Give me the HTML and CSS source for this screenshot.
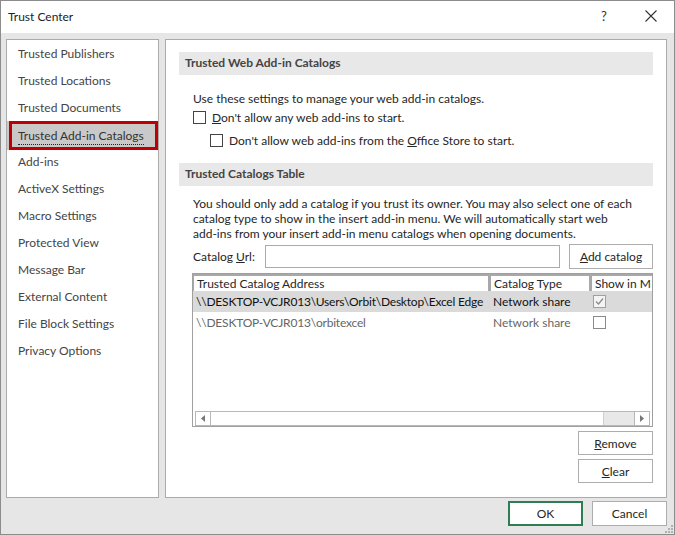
FILE: index.html
```html
<!DOCTYPE html>
<html>
<head>
<meta charset="utf-8">
<title>Trust Center</title>
<link rel="stylesheet" href="styles.css">
</head>
<body>
<div class="window">
  <div class="titlebar">
    <span class="title">Trust Center</span>
    <span class="help">?</span>
    <span class="close"><svg width="12" height="12" viewBox="0 0 12 12"><path d="M0.5 0.5 L11.5 11.5 M11.5 0.5 L0.5 11.5" stroke="#333" stroke-width="1.1" fill="none"/></svg></span>
  </div>
  <div class="main">
    <nav class="sidebar">
      <div class="nav-item">Trusted Publishers</div>
      <div class="nav-item">Trusted Locations</div>
      <div class="nav-item">Trusted Documents</div>
      <div class="nav-item selected"><span class="focus">Trusted Add-in Catalogs</span></div>
      <div class="nav-item">Add-ins</div>
      <div class="nav-item">ActiveX Settings</div>
      <div class="nav-item">Macro Settings</div>
      <div class="nav-item">Protected View</div>
      <div class="nav-item">Message Bar</div>
      <div class="nav-item">External Content</div>
      <div class="nav-item">File Block Settings</div>
      <div class="nav-item">Privacy Options</div>
    </nav>
    <section class="panel">
      <div class="section-head">Trusted Web Add-in Catalogs</div>
      <div class="section-body">
        <p class="intro">Use these settings to manage your web add-in catalogs.</p>
        <label class="check first"><span class="box"></span><span><u>D</u>on't allow any web add-ins to start.</span></label>
        <label class="check sub"><span class="box"></span><span>Don't allow web add-ins from the <u>O</u>ffice Store to start.</span></label>
      </div>
      <div class="section-head second">Trusted Catalogs Table</div>
      <div class="section-body">
        <p class="desc">You should only add a catalog if you trust its owner. You may also select one of each<br>catalog type to show in the insert add-in menu. We will automatically start web<br>add-ins from your insert add-in menu catalogs when opening documents.</p>
        <div class="url-row">
          <span class="url-label">Catalog <u>U</u>rl:</span>
          <span class="url-input"></span>
          <button class="btn add-btn"><u>A</u>dd catalog</button>
        </div>
        <div class="table">
          <div class="thead">
            <div class="th">Trusted Catalog Address</div>
            <div class="th">Catalog Type</div>
            <div class="th">Show in M</div>
          </div>
          <div class="tbody">
            <div class="tr selected-row">
              <div class="td">\\DESKTOP-VCJR013\Users\Orbit\Desktop\Excel Edge</div>
              <div class="td">Network share</div>
              <div class="td"><span class="cb checked"><svg width="11" height="11" viewBox="0 0 11 11"><path d="M2 5.5 L4.5 8 L9 2.5" stroke="#8a8a8a" stroke-width="1.2" fill="none"/></svg></span></div>
            </div>
            <div class="tr dim-row">
              <div class="td">\\DESKTOP-VCJR013\orbitexcel</div>
              <div class="td">Network share</div>
              <div class="td"><span class="cb"></span></div>
            </div>
          </div>
          <div class="hscroll">
            <span class="arrow"><svg width="4" height="7" viewBox="0 0 4 7"><path d="M4 0 L0 3.5 L4 7 Z" fill="#777"/></svg></span>
            <span class="thumb"></span>
            <span class="track"></span>
            <span class="arrow right"><svg width="4" height="7" viewBox="0 0 4 7"><path d="M0 0 L4 3.5 L0 7 Z" fill="#777"/></svg></span>
          </div>
        </div>
        <div class="side-buttons">
          <button class="btn side-btn"><u>R</u>emove</button>
          <button class="btn side-btn"><u>C</u>lear</button>
        </div>
      </div>
    </section>
  </div>
  <div class="footer">
    <button class="btn foot-btn ok">OK</button>
    <button class="btn foot-btn">Cancel</button>
  </div>
  <span class="grip"><svg width="8" height="8" viewBox="0 0 8 8"><g fill="#b0b0b0"><rect x="6" y="0" width="2" height="2"/><rect x="3" y="3" width="2" height="2"/><rect x="6" y="3" width="2" height="2"/><rect x="0" y="6" width="2" height="2"/><rect x="3" y="6" width="2" height="2"/><rect x="6" y="6" width="2" height="2"/></g></svg></span>
</div>
</body>
</html>
```
FILE: styles.css
```css
* { box-sizing: border-box; }
html, body { margin: 0; padding: 0; background: #fff; }
body {
  font-family: "Lato", "Liberation Sans", sans-serif;
  font-size: 12px;
  color: #262626;
}
u { text-decoration: underline; text-underline-offset: 1px; }

.window {
  position: relative;
  width: 675px;
  height: 535px;
  border: 1px solid #8c8c8c;
  display: flex;
  flex-direction: column;
  background: #e6e6e6;
}

.titlebar {
  height: 32px;
  background: #fff;
  display: flex;
  align-items: center;
  padding: 0 0 2px 7px;
  flex: none;
}
.title { flex: 1; color: #222; font-size: 12px; }
.help { width: 12px; margin-right: 32px; color: #333; font-size: 13px; }
.close { width: 12px; height: 12px; margin-right: 17px; display: flex; }

.main {
  height: 465px;
  flex: none;
  display: flex;
  padding: 6px 7px 0 5px;
  gap: 6px;
}

.sidebar {
  width: 153px;
  height: 459px;
  background: #fff;
  border: 1px solid #ababab;
  padding-top: 0;
  color: #444;
}
.nav-item {
  height: 27px;
  line-height: 27px;
  padding-left: 11px;
  white-space: nowrap;
}
.nav-item.selected {
  height: 29px;
  line-height: 23px;
  margin: 0 0 -2px 2px;
  padding-left: 6px;
  background: #c9c9c9;
  border: 3px solid #c00000;
  box-shadow: -2px 0 0 #c9c9c9;
  color: #333;
}
.focus { border-bottom: 1px dotted #222; padding-bottom: 1px; }

.panel {
  width: 502px;
  height: 459px;
  background: #fff;
  border: 1px solid #ababab;
  padding: 12px 13px 0 13px;
}
.section-head {
  height: 23px;
  line-height: 22px;
  background: #e8e8e8;
  padding-left: 6px;
  font-weight: bold;
  color: #444;
}
.section-head.second { margin-top: 15px; }
.section-body { padding-left: 14px; }

.intro { margin: 16px 0 0; line-height: 15px; }
.check {
  display: flex;
  align-items: center;
  height: 16px;
  white-space: nowrap;
}
.check.first { margin-top: 3px; }
.check.sub { margin-top: 7px; padding-left: 17px; }
.box {
  width: 13px;
  height: 13px;
  border: 1px solid #444;
  background: #fff;
  margin-right: 6px;
  flex: none;
}

.desc { margin: 10px 0 0; line-height: 15px; white-space: nowrap; }

.url-row {
  display: flex;
  align-items: center;
  height: 25px;
  margin-top: 3px;
}
.url-label { width: 72px; flex: none; }
.url-input {
  width: 295px;
  height: 23px;
  border: 1px solid #ababab;
  background: #fff;
  flex: none;
}
.btn {
  font-family: inherit;
  font-size: 12px;
  color: #262626;
  background: #fff;
  border: 1px solid #adadad;
  padding: 0;
  margin: 0;
}
.add-btn { margin-left: 9px; width: 85px; height: 25px; }

.table {
  margin: 4px 0 0 -1px;
  height: 154px;
  border: 1px solid #a0a0a0;
  display: flex;
  flex-direction: column;
  overflow: hidden;
}
.thead {
  display: grid;
  grid-template-columns: 294px 98px 60px;
  column-gap: 3px;
  background: #a8a8a8;
  padding: 2px 0 0 1px;
  height: 17px;
  flex: none;
}
.th {
  background: #fff;
  height: 15px;
  line-height: 15px;
  padding-left: 3px;
  white-space: nowrap;
  overflow: hidden;
}
.tbody { flex: 1; }
.tr {
  display: grid;
  grid-template-columns: 298px 101px 60px;
  height: 21px;
  align-items: center;
  white-space: nowrap;
}
.tr .td:first-child { padding-left: 3px; letter-spacing: -0.2px; overflow: hidden; }
.tr .td:nth-child(2) { padding-left: 2px; }
.tr .td:nth-child(3) { padding-left: 1px; display: flex; }
.selected-row { background: #dadada; color: #111; }
.dim-row { color: #666; }
.cb {
  width: 13px;
  height: 13px;
  border: 1px solid #8a8a8a;
  background: #fff;
  display: flex;
  align-items: center;
  justify-content: center;
}
.cb.checked { background: #f4f4f4; border-color: #a0a0a0; }

.hscroll {
  flex: none;
  height: 15px;
  margin: 0 2px 0 2px;
  display: flex;
  border: 1px solid #b8b8b8;
  background: #e8e8e8;
}
.arrow {
  width: 14px;
  display: flex;
  align-items: center;
  justify-content: center;
  background: #fff;
  flex: none;
}
.arrow.right { border-left: 1px solid #b8b8b8; width: 15px; }
.thumb {
  width: 394px;
  background: #fff;
  border-left: 1px solid #b8b8b8;
  border-right: 1px solid #d0d0d0;
}
.track { flex: 1; }

.side-buttons {
  display: flex;
  flex-direction: column;
  align-items: flex-end;
  gap: 4px;
  margin-top: 4px;
}
.side-btn { width: 75px; height: 24px; }

.footer {
  height: 36px;
  flex: none;
  display: flex;
  justify-content: flex-end;
  gap: 9px;
  padding: 3px 7px 0 0;
}
.foot-btn { width: 75px; height: 25px; }
.ok { border: 2px solid #2f7d52; }

.grip { position: absolute; right: 1px; bottom: 1px; display: flex; }
```
